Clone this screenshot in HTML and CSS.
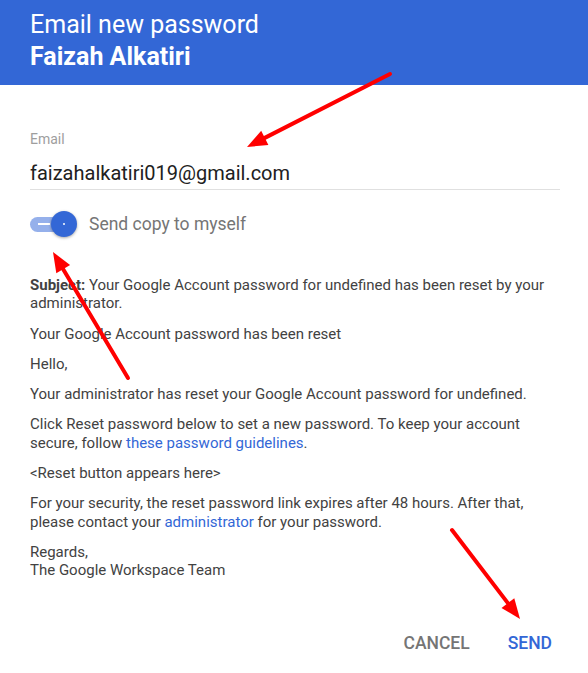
FILE: index.html
```html
<!DOCTYPE html>
<html>
<head>
<meta charset="utf-8">
<link rel="stylesheet" href="styles.css">
</head>
<body>
<div class="dialog">
  <header class="header">
    <div class="title">Email new password</div>
    <div class="name">Faizah Alkatiri</div>
  </header>
  <main class="content">
    <div class="field">
      <div class="label">Email</div>
      <div class="value">faizahalkatiri019@gmail.com</div>
    </div>
    <div class="toggle-row">
      <span class="switch"><span class="track"><span class="dash"></span></span><span class="thumb"><span class="dot"></span></span></span>
      <span class="toggle-label">Send copy to myself</span>
    </div>
    <div class="message">
      <p><b>Subject:</b> Your Google Account password for undefined has been reset by your administrator.</p>
      <p>Your Google Account password has been reset</p>
      <p>Hello,</p>
      <p>Your administrator has reset your Google Account password for undefined.</p>
      <p>Click Reset password below to set a new password. To keep your account secure, follow <a class="link">these password guidelines</a>.</p>
      <p>&lt;Reset button appears here&gt;</p>
      <p>For your security, the reset password link expires after 48 hours. After that, please contact your <a class="link">administrator</a> for your password.</p>
      <p>Regards,<br>The Google Workspace Team</p>
    </div>
  </main>
  <footer class="actions">
    <span class="btn cancel">CANCEL</span>
    <span class="btn send">SEND</span>
  </footer>
</div>
<svg class="arrows" width="588" height="673" viewBox="0 0 588 673">
  <g stroke="#ff0000" stroke-width="4" stroke-linecap="round" fill="#ff0000">
    <line x1="390" y1="74" x2="264.8" y2="137.9"/>
    <polygon stroke="none" points="247,147 261.2,130.8 268.4,145"/>
    <line x1="128" y1="378" x2="63.2" y2="269.2"/>
    <polygon stroke="none" points="53,252 70.1,265.1 56.3,273.3"/>
    <line x1="452" y1="530" x2="507.9" y2="603.1"/>
    <polygon stroke="none" points="520,619 501.5,608 514.3,598.2"/>
  </g>
</svg>
</body>
</html>
```

FILE: styles.css
```css
html, body {
  margin: 0;
  padding: 0;
  background: #ffffff;
}
body {
  font-family: Roboto, "Liberation Sans", Arial, sans-serif;
  width: 588px;
  height: 673px;
  overflow: hidden;
  position: relative;
}
.dialog {
  display: flex;
  flex-direction: column;
}
.header {
  background: #3367d6;
  color: #ffffff;
  padding: 9px 30px 12px;
  font-size: 25px;
  line-height: 32px;
}
.title { font-weight: 400; }
.name { font-weight: 700; }
.content {
  padding: 46px 28px 0 30px;
  display: flex;
  flex-direction: column;
}
.field {
  display: flex;
  flex-direction: column;
  gap: 14px;
  border-bottom: 1px solid #e0e0e0;
  padding-bottom: 4px;
}
.label {
  font-size: 14px;
  line-height: 16px;
  color: #9e9e9e;
}
.value {
  font-size: 20px;
  line-height: 24px;
  color: #212121;
}
.toggle-row {
  margin-top: 20px;
  height: 28px;
  display: flex;
  align-items: center;
  gap: 13px;
}
.switch {
  position: relative;
  width: 46px;
  height: 26px;
  display: flex;
  align-items: center;
}
.track {
  width: 40px;
  height: 15px;
  border-radius: 8px;
  background: #95b0eb;
  display: flex;
  align-items: center;
}
.dash {
  margin-left: 8px;
  width: 12px;
  height: 1.5px;
  background: #ffffff;
}
.thumb {
  position: absolute;
  left: 21px;
  top: 0;
  width: 26px;
  height: 26px;
  border-radius: 50%;
  background: #3367d6;
  box-shadow: 0 1px 3px rgba(0,0,0,0.35);
  display: flex;
  align-items: center;
  justify-content: center;
}
.dot {
  width: 2px;
  height: 2px;
  background: #ffffff;
  border-radius: 50%;
}
.toggle-label {
  font-size: 17.5px;
  color: #757575;
}
.message {
  margin-top: 38px;
  font-size: 15px;
  line-height: 18.3px;
  color: #424242;
}
.message p {
  margin: 0 0 12px;
}
.message b {
  font-weight: 700;
}
.link {
  color: #3367d6;
  text-decoration: none;
}
.actions {
  margin-top: 33px;
  display: flex;
  justify-content: flex-end;
  align-items: center;
  gap: 22px;
  padding-right: 28px;
  height: 36px;
}
.btn {
  font-size: 17.5px;
  font-weight: 500;
  padding: 0 8px;
  line-height: 36px;
}
.cancel { color: #757575; }
.send { color: #3367d6; }
.arrows {
  position: absolute;
  left: 0;
  top: 0;
  pointer-events: none;
}
```
